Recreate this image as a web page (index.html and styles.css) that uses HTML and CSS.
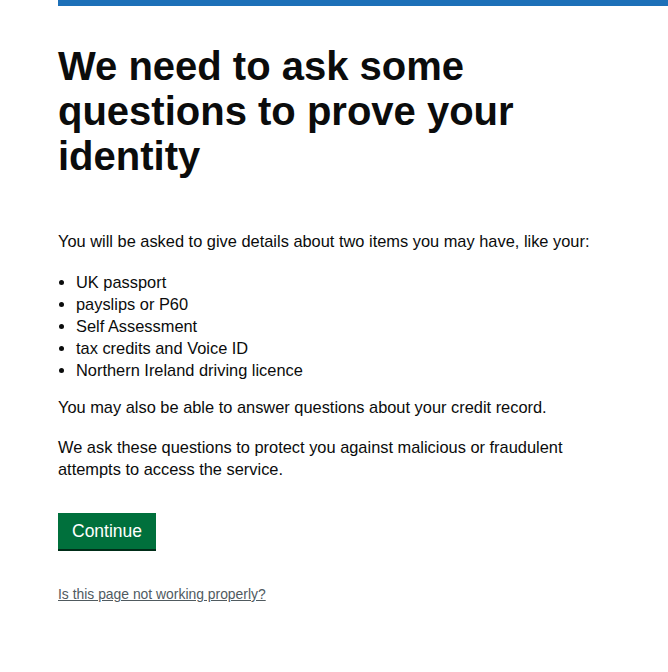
FILE: index.html
```html
<!DOCTYPE html>
<html lang="en">
<head>
<meta charset="utf-8">
<title>We need to ask some questions to prove your identity</title>
<link rel="stylesheet" href="styles.css">
</head>
<body>
<div class="page">
  <div class="bar"></div>
  <main class="main">
    <h1 class="heading">We need to ask some questions to prove your identity</h1>
    <p class="body p-intro">You will be asked to give details about two items you may have, like your:</p>
    <ul class="list">
      <li>UK passport</li>
      <li>payslips or P60</li>
      <li>Self Assessment</li>
      <li>tax credits and Voice ID</li>
      <li>Northern Ireland driving licence</li>
    </ul>
    <p class="body p-credit">You may also be able to answer questions about your credit record.</p>
    <p class="body p-protect">We ask these questions to protect you against malicious or fraudulent attempts to access the service.</p>
    <button class="button" type="button">Continue</button>
    <p class="help"><a class="help-link" href="#">Is this page not working properly?</a></p>
  </main>
</div>
</body>
</html>
```
FILE: styles.css
```css
html, body {
  margin: 0;
  padding: 0;
  background: #ffffff;
}
body {
  font-family: "Liberation Sans", Arial, sans-serif;
  color: #0b0c0c;
}
.page {
  padding-left: 58px;
}
.bar {
  height: 6px;
  background: #1d70b8;
}
.main {
  max-width: 560px;
}
.heading {
  margin: 38px 0 51px;
  font-size: 40px;
  line-height: 45px;
  font-weight: 700;
  max-width: 480px;
}
.body {
  font-size: 16.4px;
  line-height: 22px;
  margin: 0;
}
.list {
  margin: 19px 0 15px;
  padding-left: 18px;
  font-size: 16.4px;
  line-height: 22px;
}
.p-protect {
  margin-top: 18px;
}
.button {
  margin-top: 33px;
  font-family: inherit;
  font-size: 17.5px;
  line-height: 20px;
  color: #ffffff;
  background: #00703c;
  border: 0;
  padding: 8px 14px;
  box-shadow: 0 2px 0 #002d18;
  border-radius: 0;
}
.help {
  margin: 36px 0 0;
  font-size: 13.9px;
  line-height: 18px;
}
.help-link {
  color: #505a5f;
  text-decoration: underline;
}
```
